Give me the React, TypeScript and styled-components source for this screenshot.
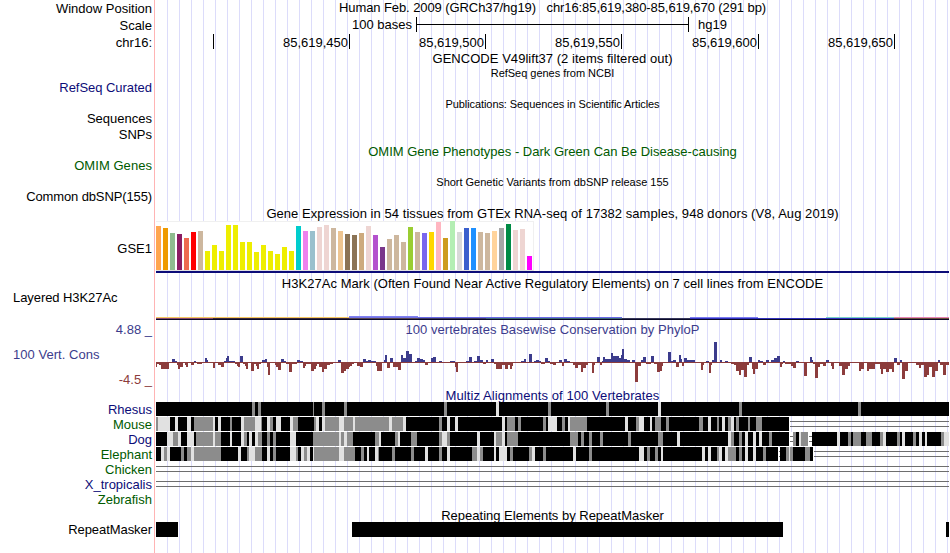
import styled, { createGlobalStyle } from "styled-components"

const BLACK = '#000000';
const NAVY = '#0c0c78';
const GREEN = '#005a00';
const PHYLO_UP = '#3c3c8c';
const PHYLO_DOWN = '#8c3c3c';
const TRACK_LEFT = 156;
const TRACK_WIDTH = 793;

// [colour, height] for each tissue
const tissues: [string, number][] = [
  ['#ffa54f', 44], ['#ee9a00', 42], ['#8fbc8f', 37], ['#8b1c62', 36], ['#ee6a50', 32], ['#ff0000', 38], ['#cdb79e', 39],
  ['#eeee00', 19], ['#eeee00', 25], ['#eeee00', 19], ['#eeee00', 45], ['#eeee00', 45], ['#eeee00', 28], ['#eeee00', 28],
  ['#eeee00', 18], ['#eeee00', 25], ['#eeee00', 19], ['#eeee00', 16], ['#eeee00', 23], ['#eeee00', 19],
  ['#00cdcd', 44], ['#ee82ee', 39], ['#9ac0cd', 39], ['#eed5d2', 43], ['#eed5d2', 45], ['#cdb79e', 42], ['#eec591', 39],
  ['#8b7355', 36], ['#8b7355', 35], ['#cdaa7d', 37], ['#eed5d2', 44], ['#b452cd', 35], ['#7a378b', 23], ['#cdb79e', 31],
  ['#cdb79e', 35], ['#cdb79e', 28], ['#9acd32', 43], ['#cdb79e', 38], ['#7a67ee', 37], ['#ffd700', 38], ['#ffb6c1', 48],
  ['#cd9b1d', 32], ['#b4eeb4', 49], ['#d9d9d9', 38], ['#3a5fcd', 42], ['#1e90ff', 42], ['#cdb79e', 38], ['#cdb79e', 37],
  ['#ffd39b', 39], ['#a6a6a6', 42], ['#008b45', 46], ['#eed5d2', 40], ['#eed5d2', 41], ['#ff00ff', 14],
];

// runs of "width,score" starting at the given x
const phyloRuns = [
  { start: 156, runs: '1,-5 2,-2 2,-3 8,-7 3,-1 3,3 2,1 1,-3 2,-7 3,-5 2,-1 1,-3 2,-5 3,-1 3,-3 2,1 1,-1 5,-2 3,-1 2,4 1,2 5,-1 2,-6 3,-1 3,-3 3,-5 2,1 1,4 2,6 6,1 2,-2 1,-4 2,-5 3,6 2,-2 1,-4 2,-7 3,-1 3,-9 2,-2 1,-4 2,-7 2,-2 1,-1 3,2 2,3 1,-5 2,-13 5,-1 1,-3 2,-5 3,-8 3,3 2,1 3,-2 3,-10 5,-2 3,2 3,1 2,-6 1,-4 5,-2 3,-9 2,-7 1,-4 2,-2 3,-5 2,-10 3,-7 3,-3 3,-2 5,-1 3,2 3,-11 2,-9 3,-7 1,-5' },
  { start: 350, runs: '2,-4 2,-2 3,-1 3,-4 3,-5 3,3 2,1 3,2 5,1 1,-4 5,-9 2,-1 1,2 2,7 3,-6 3,4 5,-5 3,-8 2,7 3,4 3,11 3,8 3,-1 2,1 3,4 3,3 2,2 3,-3 3,-1 2,4 3,5 3,-1 3,1 8,-1 5,1 1,-5 2,-10 8,-1 3,1 3,5 2,-1 3,1 3,6 3,2 3,-2 2,2 3,-1 3,3 2,-2 6,-7 3,-3 3,-7 2,-3 2,-7 1,-4 8,-1 3,1 2,3 3,-1 3,8 2,-1 2,1 3,2 2,1 4,-2 3,4 2,1' },
  { start: 550, runs: '3,-2 3,-3 3,-1 3,2 2,-4 3,3 3,1 3,-1 2,-3 3,-6 3,-3 2,-10 3,-6 2,-3 4,-1 2,-11 1,-3 2,-1 3,5 2,-3 1,1 2,5 6,3 2,9 6,6 2,4 1,7 2,13 3,3 3,2 2,-1 3,2 3,-20 3,-4 2,2 3,5 5,-2 3,6 3,-2 3,-10 2,-9 1,-4 5,-1 3,10 2,1 3,2 3,-5 2,7 1,3 2,-4 3,4 8,2 6,-1 2,-8 1,-3 2,-1 3,1 2,-11 1,-3 2,2 3,20 3,-1 2,2 3,-1 3,1 3,-1 3,-2 2,-3 3,-9 2,-13 3,-8 3,-15 2,-3 1,5' },
  { start: 750, runs: '2,5 1,-7 2,-12 3,-7 2,2 3,1 3,-3 3,2 2,-1 3,2 3,4 3,6 2,-5 1,-2 2,1 3,-2 3,-2 2,-4 3,-6 3,1 5,-1 3,-14 3,-1 2,5 1,2 2,-2 3,-16 2,-5 3,-2 3,-4 3,2 2,-1 1,-4 2,-7 5,-1 3,-4 3,-13 3,-7 2,-4 9,-1 2,-9 3,-7 3,-1 2,-9 6,-7 5,-2 1,-7 2,-12 3,-7 3,-10 3,-7 2,-10 3,4 3,-3 2,2 3,-17 3,-9 8,-1 3,-3 2,-6 3,-3 3,-15 2,-13 3,-5 3,-15 3,-9 2,2 3,-3 3,-13 3,-3' },
];

// marks are shade + x + width: g = grey, w = light, n = unaligned gap
const species = [
  { name: 'Rhesus', color: NAVY, end: 949, marks: 'g252,3 g258,3 g313,1 g322,3 g344,3 g444,3 w496,3 g548,3 g606,3 w658,3 g739,3 g858,3' },
  { name: 'Mouse', color: GREEN, end: 789, marks: 'g156,2 w158,12 w175,3 w187,4 g194,19 w213,2 w218,3 g230,2 w241,3 g244,11 w255,6 g261,1 w267,3 g270,3 w276,5 w290,3 g293,5 g314,2 w316,3 w322,3 g325,14 w339,5 g344,9 w353,2 g355,34 w389,3 g392,11 w403,3 g439,3 w447,3 w455,3 w502,3 g507,8 g518,3 g543,3 w548,9 g562,3 w568,2 g570,17 w625,3 g636,3 w639,5 w650,2 g655,6 g666,3 g699,4 w708,3 g717,2 w722,3 g728,3 w731,3 g736,3 g748,2 g756,6' },
  { name: 'Dog', color: NAVY, end: 949, marks: 'w167,6 g173,5 w178,3 w187,7 g196,17 w213,2 g215,6 w230,2 w241,3 g244,3 w249,3 w255,3 g258,4 g267,3 g273,3 w290,6 g313,26 w339,2 g341,3 w344,3 g347,6 g375,4 w379,2 g395,3 w398,2 g411,6 g439,3 w442,5 g447,3 w477,3 w494,2 g496,6 w502,3 g507,11 g570,8 g581,3 g589,3 g600,3 g628,3 g658,5 w677,3 w728,3 g731,3 g739,3 w745,3 w753,3 w759,3 g769,3 n789,4 g793,3 w799,2 g801,7 n808,4 w837,3 g848,3 g853,8 g866,6 g880,3 w883,3 g897,3 w902,3 g913,3 w919,3 w925,2 g941,3 w944,5' },
  { name: 'Elephant', color: GREEN, end: 813, marks: 'w161,3 g164,3 w167,3 g181,3 g187,4 w191,3 g194,27 w238,3 g247,2 w249,6 g255,7 w267,3 g273,3 w290,6 g296,2 w301,3 g304,3 w307,3 w313,1 g314,25 w339,5 g344,11 g361,3 w367,2 w375,3 g378,1 g392,3 g411,3 w425,3 g439,3 w447,3 g472,5 w477,3 g480,3 w494,2 w499,8 g510,3 g529,3 w532,3 g543,3 w573,3 g589,3 w639,5 g647,3 g655,3 w661,2 w702,3 w708,3 g717,2 w719,3 w725,3 g728,8 g739,3 w745,3 w753,3 g763,3 n778,2 g786,3 w789,1 g790,3 g805,5' },
  { name: 'Chicken', color: GREEN, end: 156, marks: '' },
  { name: 'X_tropicalis', color: NAVY, end: 156, marks: '' },
  { name: 'Zebrafish', color: GREEN, end: 0, marks: '' },
];

const shades: Record<string, string> = { g: '#8c8c8c', w: '#e1e1e1' };

const rulerMarks = [
  { width: 58, text: '' },
  { width: 136, text: '85,619,450' },
  { width: 136, text: '85,619,500' },
  { width: 136, text: '85,619,550' },
  { width: 137, text: '85,619,600' },
  { width: 136, text: '85,619,650' },
];

// [x, y, width, colour]
const h3k27 = [
  [156, 1, 193, '#f7c860'],
  [156, 2, 57, '#8b4a6e'], [213, 2, 136, '#3c2a3c'],
  [349, 0, 69, '#8080f0'], [349, 1, 69, '#7474e4'], [349, 2, 69, '#5a4650'],
  [418, 1, 204, '#6a6ae8'], [418, 2, 68, '#403c64'], [486, 2, 136, '#3c6a78'],
  [622, 2, 68, '#37375a'],
  [690, 1, 68, '#7a7af0'], [690, 2, 204, '#3232be'],
  [826, 1, 68, '#78d2c8'],
  [894, 1, 55, '#e884b4'], [894, 2, 55, '#6e503c'],
] as [number, number, number, string][];

const phyloBars = phyloRuns.flatMap(({ start, runs }) => {
  let x = start - TRACK_LEFT;
  return runs.split(' ').map((run) => {
    const [width, score] = run.split(',').map(Number);
    const bar = { x, width, score };
    x += width;
    return bar;
  });
});

function Alignment({ end, marks }: { end: number, marks: string }) {
  if (!end) return <AlignmentSvg />;
  const parsed = marks ? marks.split(' ').map((m) => {
    const [x, width] = m.slice(1).split(',').map(Number);
    return { shade: m[0], x: x - TRACK_LEFT, width };
  }) : [];
  const solid = end - TRACK_LEFT;
  const lines = solid ? solid + 1 : 0;
  return (
    <AlignmentSvg shapeRendering="crispEdges">
      <rect width={solid} height="14" fill={BLACK} />
      {parsed.map(({ shade, x, width }) => shade === 'n' ? (
        <g key={x}>
          <rect x={x} width={width} height="14" fill="#ffffff" />
          <path d={`M${x + 1} 4h${width - 1}v1h-${width - 1}zm0 5h${width - 1}v1h-${width - 1}z`} fill="#6e6e6e" />
        </g>
      ) : <rect key={x} x={x} width={width} height="14" fill={shades[shade]} />)}
      {lines < TRACK_WIDTH && (
        <>
          <rect x={lines} y="4" width={TRACK_WIDTH - lines} height="1" fill="#6e6e6e" />
          <rect x={lines} y="9" width={TRACK_WIDTH - lines} height="1" fill="#6e6e6e" />
        </>
      )}
    </AlignmentSvg>
  )
}

export default function App() {
  return (
    <Browser>
      <GlobalStyle />
      <Row $height={17}>
        <Labels $top={1}><Label>Window Position</Label></Labels>
        <Track><Title $spacing={-0.085}>Human Feb. 2009 (GRCh37/hg19)&nbsp;&nbsp; chr16:85,619,380-85,619,670 (291 bp)</Title></Track>
      </Row>
      <Row $height={16}>
        <Labels $top={1}><Label>Scale</Label></Labels>
        <Track>
          <Scale>
            <ScaleText>100 bases</ScaleText>
            <ScaleBar />
            <span>hg19</span>
          </Scale>
        </Track>
      </Row>
      <Row $height={17}>
        <Labels $top={2}><Label>chr16:</Label></Labels>
        <Track $top={1}>
          <Ruler>
            {rulerMarks.map(({ width, text }, i) => <RulerMark key={i} $width={width}>{text}</RulerMark>)}
          </Ruler>
        </Track>
      </Row>
      <Row $height={15}>
        <Labels />
        <Track $top={1}><Title $spacing={0.04}>GENCODE V49lift37 (2 items filtered out)</Title></Track>
      </Row>
      <Row $height={31}>
        <Labels $top={15}><Label $color={NAVY} $spacing={-0.04}>RefSeq Curated</Label></Labels>
        <Track $top={2}><Title $small $spacing={-0.03}>RefSeq genes from NCBI</Title></Track>
      </Row>
      <Row $height={46}>
        <Labels $top={15} $gap={1}>
          <Label>Sequences</Label>
          <Label>SNPs</Label>
        </Labels>
        <Track $top={2}><Title $small $spacing={-0.08}>Publications: Sequences in Scientific Articles</Title></Track>
      </Row>
      <Row $height={32}>
        <Labels $top={16}><Label $color={GREEN} $spacing={0.05}>OMIM Genes</Label></Labels>
        <Track $top={2}><Title $color={GREEN}>OMIM Gene Phenotypes - Dark Green Can Be Disease-causing</Title></Track>
      </Row>
      <Row $height={31}>
        <Labels $top={15}><Label $spacing={-0.12}>Common dbSNP(155)</Label></Labels>
        <Track $top={2}><Title $small $spacing={-0.02}>Short Genetic Variants from dbSNP release 155</Title></Track>
      </Row>
      <Row $height={70}>
        <Labels $top={36}><Label>GSE1</Label></Labels>
        <Track $top={1}>
          <Title $spacing={0.055}>Gene Expression in 54 tissues from GTEx RNA-seq of 17382 samples, 948 donors (V8, Aug 2019)</Title>
          <TissueChart>
            {tissues.map(([color, height], i) => <TissueBar key={i} $color={color} $height={height} />)}
          </TissueChart>
          <GeneLine />
        </Track>
      </Row>
      <Row $height={46}>
        <Labels $top={15}><Label $left $spacing={-0.07}>Layered H3K27Ac</Label></Labels>
        <Track $top={1}>
          <Title $spacing={0.045}>H3K27Ac Mark (Often Found Near Active Regulatory Elements) on 7 cell lines from ENCODE</Title>
          <HistoneSvg shapeRendering="crispEdges">
            <rect y="3" width={TRACK_WIDTH} height="1" fill="#0a0a28" />
            {h3k27.map(([x, y, width, color]) => (
              <rect key={`${x}-${y}`} x={x - TRACK_LEFT} y={y} width={width} height="1" fill={color} />
            ))}
          </HistoneSvg>
        </Track>
      </Row>
      <Row $height={66}>
        <Labels $top={1} $gap={10}>
          <Label $color={PHYLO_UP}>4.88 _</Label>
          <Label $color={PHYLO_UP} $left $spacing={0.04}>100 Vert. Cons</Label>
          <Label $color={PHYLO_DOWN}>-4.5 _</Label>
        </Labels>
        <Track $top={1}>
          <Title $color={PHYLO_UP} $spacing={0.04}>100 vertebrates Basewise Conservation by PhyloP</Title>
          <PhyloSvg shapeRendering="crispEdges">
            {phyloBars.map(({ x, width, score }) => (
              <rect
                key={x}
                x={x}
                y={score > 0 ? 25 - score : 25}
                width={width}
                height={Math.abs(score)}
                fill={score > 0 ? PHYLO_UP : PHYLO_DOWN}
              />
            ))}
            <rect y="25" width={TRACK_WIDTH} height="1" fill={PHYLO_DOWN} />
          </PhyloSvg>
        </Track>
      </Row>
      <Row $height={120}>
        <Labels $top={15}>
          {species.map(({ name, color }) => <Label key={name} $color={color}>{name}</Label>)}
        </Labels>
        <Track $top={1}>
          <Title $color={NAVY} $tight $spacing={0.08}>Multiz Alignments of 100 Vertebrates</Title>
          {species.map(({ name, end, marks }) => <Alignment key={name} end={end} marks={marks} />)}
        </Track>
      </Row>
      <Row $height={46}>
        <Labels $top={15}><Label $spacing={-0.06}>RepeatMasker</Label></Labels>
        <Track $top={1}>
          <Title $tight>Repeating Elements by RepeatMasker</Title>
          <Repeats>
            <Repeat $width={22} />
            <Repeat $width={431} />
            <Repeat $width={3} />
          </Repeats>
        </Track>
      </Row>
    </Browser>
  )
}

const GlobalStyle = createGlobalStyle`
  body {
    margin: 0;
    background: #ffffff;
  }
`
const Browser = styled.div`
  width: 949px;
  height: 553px;
  overflow: hidden;
  font-family: "Liberation Sans", Arial, sans-serif;
  font-size: 13px;
  line-height: 15px;
  color: #000000;
  white-space: nowrap;
`
const Row = styled.div<{ $height: number }>`
  display: flex;
  height: ${({ $height }) => $height}px;
`
const Labels = styled.div<{ $top?: number, $gap?: number }>`
  display: flex;
  flex-direction: column;
  gap: ${({ $gap = 0 }) => $gap}px;
  box-sizing: border-box;
  width: 154px;
  padding: ${({ $top = 0 }) => $top}px 2px 0 13px;
  flex-shrink: 0;
`
const Label = styled.div<{ $color?: string, $left?: boolean, $spacing?: number }>`
  display: flex;
  height: 15px;
  flex-shrink: 0;
  justify-content: ${({ $left }) => $left ? 'flex-start' : 'flex-end'};
  letter-spacing: ${({ $spacing = 0 }) => $spacing}px;
  color: ${({ $color = BLACK }) => $color};
`
const Track = styled.div<{ $top?: number }>`
  box-sizing: border-box;
  width: 795px;
  padding: ${({ $top = 0 }) => $top}px 0 0 1px;
  border-left: 1px solid #ffb4b4;
  background: repeating-linear-gradient(to right, #dcdcfa 0 1px, transparent 1px 12px) 12px 0 no-repeat;
`
const Title = styled.div<{ $color?: string, $small?: boolean, $tight?: boolean, $spacing?: number }>`
  height: ${({ $small, $tight }) => $small ? 12 : $tight ? 14 : 15}px;
  font-size: ${({ $small }) => $small ? 11 : 13}px;
  line-height: ${({ $small }) => $small ? 12 : 15}px;
  letter-spacing: ${({ $spacing = 0 }) => $spacing}px;
  text-align: center;
  color: ${({ $color = BLACK }) => $color};
`
const Scale = styled.div`
  display: flex;
  height: 15px;
`
const ScaleText = styled.span`
  width: 256px;
  margin-right: 4px;
  text-align: right;
`
const ScaleBar = styled.div`
  box-sizing: border-box;
  width: 273px;
  height: 15px;
  margin-right: 9px;
  border: solid #000000;
  border-width: 0 1px;
  background: linear-gradient(#000000, #000000) 0 7px / 100% 1px no-repeat;
`
const Ruler = styled.div`
  display: flex;
  height: 15px;
`
const RulerMark = styled.div<{ $width: number }>`
  box-sizing: border-box;
  width: ${({ $width }) => $width}px;
  height: 15px;
  padding: 1px 1px 0 0;
  border-right: 1px solid #000000;
  text-align: right;
`
const TissueChart = styled.div`
  display: flex;
  align-items: flex-end;
  gap: 2px;
  box-sizing: border-box;
  width: 378px;
  height: 50px;
  border: solid #f0f0f0;
  border-width: 1px 1px 1px 0;
  border-bottom-color: #e1e1e1;
  background: #ffffff;
`
const TissueBar = styled.div<{ $color: string, $height: number }>`
  flex: 0 0 5px;
  height: ${({ $height }) => $height}px;
  background: ${({ $color }) => $color};
`
const GeneLine = styled.div`
  height: 2px;
  background: ${NAVY};
`
const HistoneSvg = styled.svg`
  display: block;
  width: 793px;
  height: 4px;
  margin-top: 25px;
`
const PhyloSvg = styled.svg`
  display: block;
  width: 793px;
  height: 50px;
`
const AlignmentSvg = styled.svg`
  display: block;
  width: 793px;
  height: 14px;
  margin-bottom: 1px;
`
const Repeats = styled.div`
  display: flex;
  justify-content: space-between;
  height: 15px;
`
const Repeat = styled.div<{ $width: number }>`
  width: ${({ $width }) => $width}px;
  height: 15px;
  background: #000000;

  &:nth-child(2) {
    margin-left: 11px;
  }
`
